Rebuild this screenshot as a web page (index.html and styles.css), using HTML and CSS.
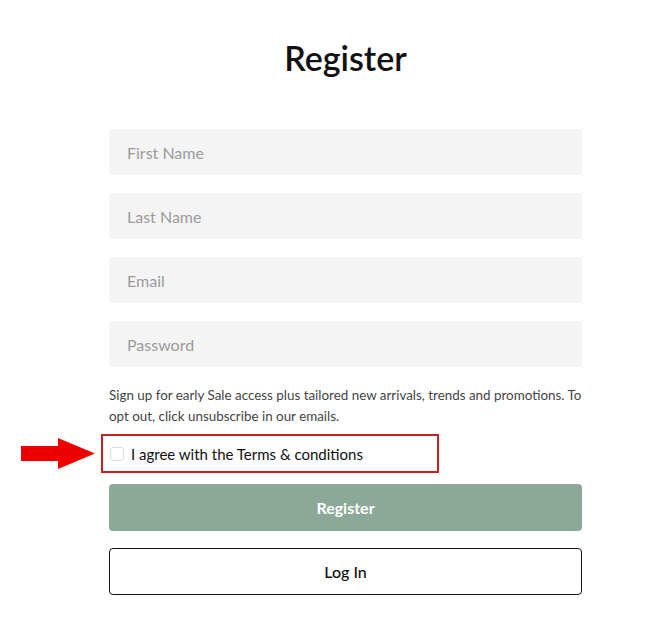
FILE: index.html
```html
<!DOCTYPE html>
<html lang="en">
<head>
  <meta charset="UTF-8" />
  <meta name="viewport" content="width=device-width, initial-scale=1.0" />
  <title>Register</title>
  <link rel="stylesheet" href="styles.css">
</head>
<body>
  <section class="register">
    <h1>Register</h1>

    <form class="register-form">
      <input type="text" placeholder="First Name" />
      <input type="text" placeholder="Last Name" />
      <input type="email" placeholder="Email" />
      <input type="password" placeholder="Password" />

      <p class="note">Sign up for early Sale access plus tailored new arrivals, trends and promotions. To opt out, click unsubscribe in our emails.</p>

      <div class="terms-wrap">
        <svg class="arrow" viewBox="0 0 74 31" width="74" height="31">
          <polygon points="0,8 37,8 37,0 74,15.5 37,31 37,23 0,23" fill="#ee0000"/>
        </svg>
        <label class="terms">
          <span class="box"></span>
          I agree with the Terms &amp; conditions
        </label>
      </div>

      <button type="button" class="btn btn-primary">Register</button>
      <button type="button" class="btn btn-outline">Log In</button>
    </form>
  </section>
</body>
</html>
```

FILE: styles.css
```css
body {
  font-family: 'Lato', 'Noto Sans', sans-serif;
  background: #ffffff;
  margin: 0;
  color: #111;
}

.register {
  width: 473px;
  margin-left: 109px;
  padding-top: 38px;
}

h1 {
  margin: 0 0 51px;
  text-align: center;
  font-size: 34px;
  font-weight: 600;
  line-height: 40px;
}

.register-form {
  display: flex;
  flex-direction: column;
}

.register-form input {
  height: 46px;
  border: none;
  background: #f4f4f4;
  padding: 0 18px;
  margin: 0 0 18px;
  font-family: inherit;
  font-size: 16px;
  color: #333;
  outline: none;
}

.register-form input::placeholder {
  color: #9b9b9b;
}

.note {
  margin: 0;
  font-size: 13.4px;
  line-height: 21px;
  color: #444;
}

.terms-wrap {
  position: relative;
  margin: 7px 0 11px;
}

.arrow {
  position: absolute;
  left: -88px;
  top: 4px;
}

.terms {
  display: flex;
  align-items: center;
  gap: 7px;
  box-sizing: border-box;
  width: 338px;
  height: 39px;
  margin-left: -8px;
  padding-left: 7px;
  border: 2px solid #c8201f;
  font-size: 15px;
  color: #111;
}

.box {
  width: 12px;
  height: 12px;
  border: 1px solid #dddddd;
  border-radius: 3px;
}

.btn {
  height: 47px;
  border-radius: 4px;
  font-family: inherit;
  font-size: 16px;
  cursor: pointer;
}

.btn-primary {
  background: #8ca898;
  border: none;
  color: #fff;
  font-weight: 700;
  margin-bottom: 17px;
}

.btn-outline {
  background: #fff;
  border: 1px solid #111;
  color: #111;
  font-weight: 500;
}
```
